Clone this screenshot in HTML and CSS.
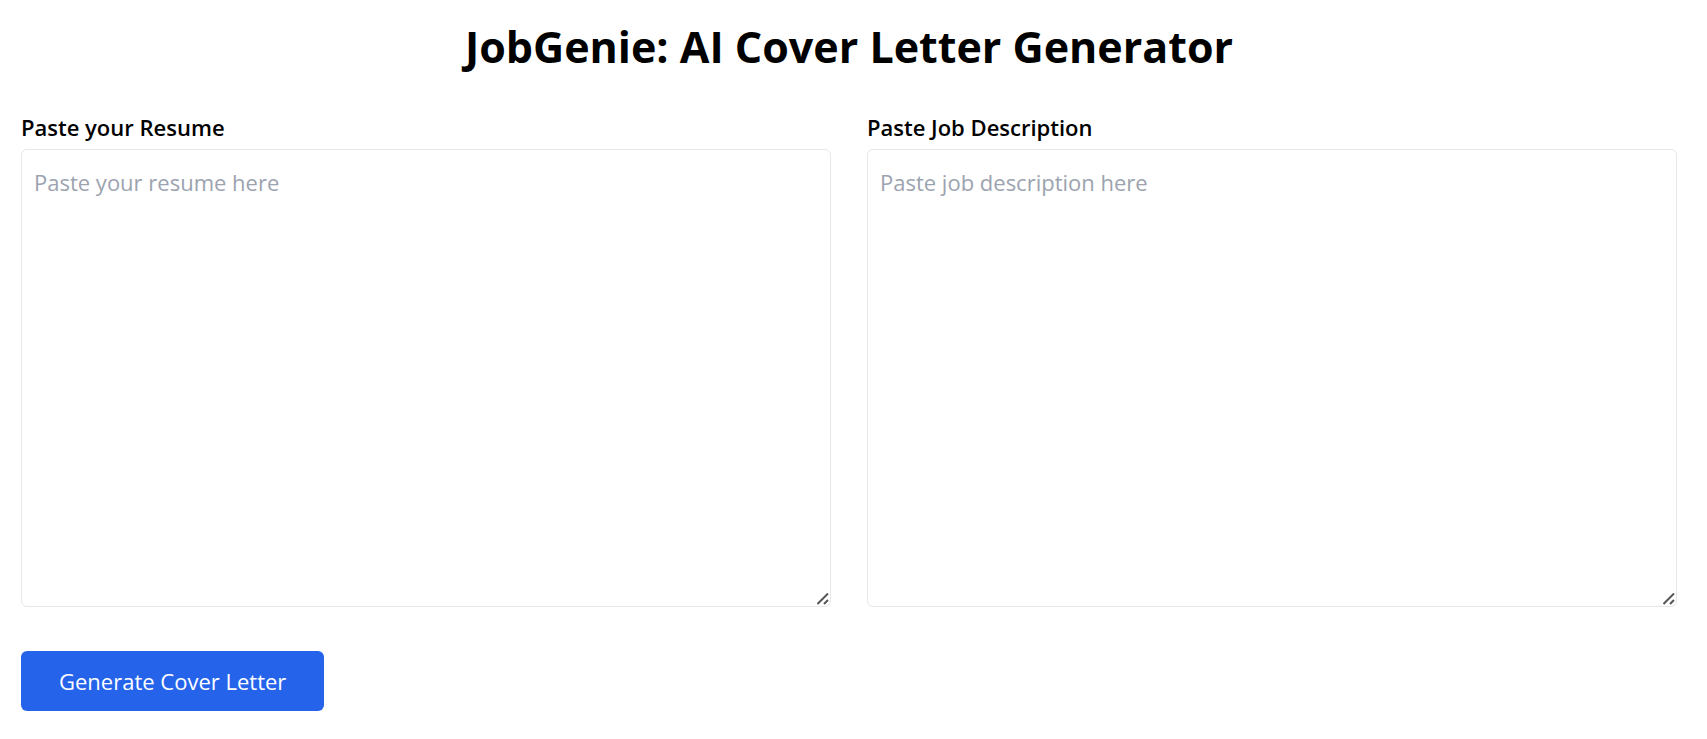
FILE: index.html
```html
<!DOCTYPE html>
<html lang="en">
<head>
<meta charset="utf-8">
<meta name="viewport" content="width=device-width, initial-scale=1">
<title>JobGenie: AI Cover Letter Generator</title>
<link rel="stylesheet" href="styles.css">
</head>
<body>
<main class="page">
  <h1 class="title">JobGenie: AI Cover Letter Generator</h1>
  <form class="form">
    <div class="fields">
      <div class="field">
        <label class="label" for="resume">Paste your Resume</label>
        <div class="box">
          <textarea class="textarea" id="resume" placeholder="Paste your resume here"></textarea>
          <svg class="grip" viewBox="0 0 12 12" aria-hidden="true"><path d="M.5 11 11 .5M7 11 11 7"/></svg>
        </div>
      </div>
      <div class="field">
        <label class="label" for="job">Paste Job Description</label>
        <div class="box">
          <textarea class="textarea" id="job" placeholder="Paste job description here"></textarea>
          <svg class="grip" viewBox="0 0 12 12" aria-hidden="true"><path d="M.5 11 11 .5M7 11 11 7"/></svg>
        </div>
      </div>
    </div>
    <button class="button" type="button">Generate Cover Letter</button>
  </form>
</main>
</body>
</html>
```
FILE: styles.css
```css
* {
  box-sizing: border-box;
}

body {
  margin: 0;
  background: #fff;
  color: #000;
  font-family: "Segoe UI", "Open Sans", "Noto Sans", sans-serif;
  font-size: 22px;
  line-height: 36px;
}

.page {
  padding: 20px 30px 28px 21px;
}

.title {
  margin: 0 0 35px;
  font-size: 43px;
  font-weight: 700;
  line-height: 54px;
  text-align: center;
}

.form {
  display: flex;
  flex-direction: column;
  align-items: flex-start;
  gap: 44px;
}

.fields {
  display: grid;
  grid-template-columns: 1fr 1fr;
  gap: 36px;
  width: 100%;
}

.label {
  display: block;
  margin-bottom: 4px;
  font-weight: 600;
}

.box {
  position: relative;
}

.textarea {
  display: block;
  width: 100%;
  height: 458px;
  padding: 14px 12px;
  border: 1px solid #e5e7eb;
  border-radius: 6px;
  background: #fff;
  color: inherit;
  font: inherit;
  resize: vertical;
}

.textarea::placeholder {
  color: #9ca3af;
  opacity: 1;
}

.textarea::-webkit-resizer {
  display: none;
}

.grip {
  position: absolute;
  right: 2px;
  bottom: 2px;
  width: 12px;
  height: 12px;
  fill: none;
  stroke: #555;
  stroke-width: 2;
  pointer-events: none;
}

.button {
  padding: 12px 38px;
  border: 0;
  border-radius: 6px;
  background: #2563eb;
  color: #fff;
  font: inherit;
  cursor: pointer;
}
```
